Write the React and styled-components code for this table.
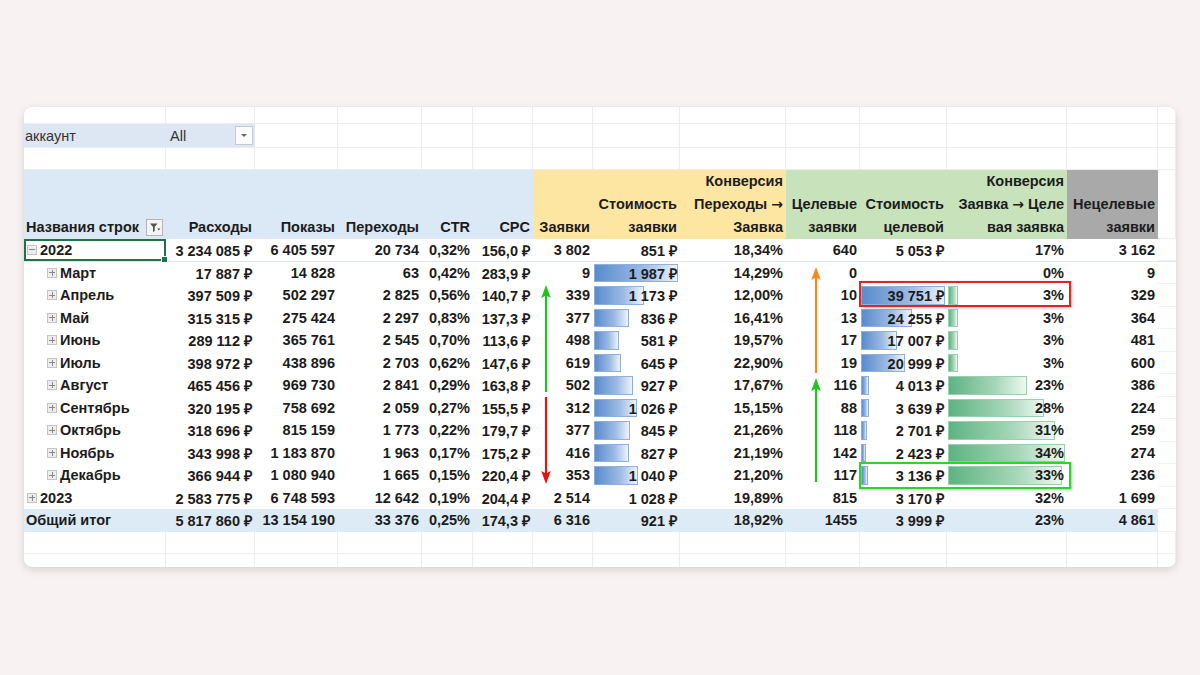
import React from "react"
import styled, { createGlobalStyle } from "styled-components"

const GlobalStyle = createGlobalStyle`
  body {
    margin: 0;
    background: #f8f3f2;
    font-family: "Liberation Sans", Arial, sans-serif;
  }
`

const COLS = "142px 89px 83px 84px 51px 60px 60px 87px 106px 74px 87px 120px 91px 1fr"

const rows = [
  { label: "2022", level: 0, open: true, selected: true, v: ["3 234 085 ₽", "6 405 597", "20 734", "0,32%", "156,0 ₽", "3 802", "851 ₽", "18,34%", "640", "5 053 ₽", "17%", "3 162"] },
  { label: "Март", level: 1, v: ["17 887 ₽", "14 828", "63", "0,42%", "283,9 ₽", "9", "1 987 ₽", "14,29%", "0", "", "0%", "9"], cost: 1987, tcost: 0, conv: 0 },
  { label: "Апрель", level: 1, v: ["397 509 ₽", "502 297", "2 825", "0,56%", "140,7 ₽", "339", "1 173 ₽", "12,00%", "10", "39 751 ₽", "3%", "329"], cost: 1173, tcost: 39751, conv: 3 },
  { label: "Май", level: 1, v: ["315 315 ₽", "275 424", "2 297", "0,83%", "137,3 ₽", "377", "836 ₽", "16,41%", "13", "24 255 ₽", "3%", "364"], cost: 836, tcost: 24255, conv: 3 },
  { label: "Июнь", level: 1, v: ["289 112 ₽", "365 761", "2 545", "0,70%", "113,6 ₽", "498", "581 ₽", "19,57%", "17", "17 007 ₽", "3%", "481"], cost: 581, tcost: 17007, conv: 3 },
  { label: "Июль", level: 1, v: ["398 972 ₽", "438 896", "2 703", "0,62%", "147,6 ₽", "619", "645 ₽", "22,90%", "19", "20 999 ₽", "3%", "600"], cost: 645, tcost: 20999, conv: 3 },
  { label: "Август", level: 1, v: ["465 456 ₽", "969 730", "2 841", "0,29%", "163,8 ₽", "502", "927 ₽", "17,67%", "116", "4 013 ₽", "23%", "386"], cost: 927, tcost: 4013, conv: 23 },
  { label: "Сентябрь", level: 1, v: ["320 195 ₽", "758 692", "2 059", "0,27%", "155,5 ₽", "312", "1 026 ₽", "15,15%", "88", "3 639 ₽", "28%", "224"], cost: 1026, tcost: 3639, conv: 28 },
  { label: "Октябрь", level: 1, v: ["318 696 ₽", "815 159", "1 773", "0,22%", "179,7 ₽", "377", "845 ₽", "21,26%", "118", "2 701 ₽", "31%", "259"], cost: 845, tcost: 2701, conv: 31 },
  { label: "Ноябрь", level: 1, v: ["343 998 ₽", "1 183 870", "1 963", "0,17%", "175,2 ₽", "416", "827 ₽", "21,19%", "142", "2 423 ₽", "34%", "274"], cost: 827, tcost: 2423, conv: 34 },
  { label: "Декабрь", level: 1, v: ["366 944 ₽", "1 080 940", "1 665", "0,15%", "220,4 ₽", "353", "1 040 ₽", "21,20%", "117", "3 136 ₽", "33%", "236"], cost: 1040, tcost: 3136, conv: 33 },
  { label: "2023", level: 0, open: false, v: ["2 583 775 ₽", "6 748 593", "12 642", "0,19%", "204,4 ₽", "2 514", "1 028 ₽", "19,89%", "815", "3 170 ₽", "32%", "1 699"] },
]

const total = ["5 817 860 ₽", "13 154 190", "33 376", "0,25%", "174,3 ₽", "6 316", "921 ₽", "18,92%", "1455", "3 999 ₽", "23%", "4 861"]

const BLUE = "#dbe8f5"
const YELLOW = "#fde6a2"
const GREEN = "#c8e2bb"
const GRAY = "#a9a9a9"

// "→" в заголовке рисуем отдельным шрифтом, чтобы стрелка была крупнее
const headers = [
  { bg: BLUE, lines: ["Расходы"] },
  { bg: BLUE, lines: ["Показы"] },
  { bg: BLUE, lines: ["Переходы"] },
  { bg: BLUE, lines: ["CTR"] },
  { bg: BLUE, lines: ["CPC"] },
  { bg: YELLOW, lines: ["Заявки"] },
  { bg: YELLOW, lines: ["Стоимость", "заявки"] },
  { bg: YELLOW, lines: ["Конверсия", ["Переходы ", ""], "Заявка"] },
  { bg: GREEN, lines: ["Целевые", "заявки"] },
  { bg: GREEN, lines: ["Стоимость", "целевой"] },
  { bg: GREEN, lines: ["Конверсия", ["Заявка ", " Целе"], "вая заявка"] },
  { bg: GRAY, lines: ["Нецелевые", "заявки"] },
]

export default function App() {
  return (
    <>
      <GlobalStyle />
      <Page>
        <Card>
          <Row $h={17}>
            {Array.from({ length: 14 }).map((_, i) => <GridCell key={i} />)}
          </Row>
          <Row $h={24}>
            <FilterCell>аккаунт</FilterCell>
            <FilterValue>
              <span>All</span>
              <DropButton><DropArrow /></DropButton>
            </FilterValue>
            {Array.from({ length: 12 }).map((_, i) => <GridCell key={i} />)}
          </Row>
          <Row $h={22}>
            {Array.from({ length: 14 }).map((_, i) => <GridCell key={i} />)}
          </Row>

          <Row $h={69}>
            <HeadCell $bg={BLUE} $left>
              <HeadLine>
                Названия строк
                <FilterBtn>
                  <svg width="12" height="11" viewBox="0 0 12 11">
                    <path d="M1 1.5h7.5L5.7 5v4L4 10V5z" fill="#555" />
                    <path d="M8.2 6.5h3.3L9.85 8.5z" fill="#555" />
                  </svg>
                </FilterBtn>
              </HeadLine>
            </HeadCell>
            {headers.map((h, i) => (
              <HeadCell key={i} $bg={h.bg}>
                {h.lines.map((l, j) => (
                  <HeadLine key={j}>
                    {Array.isArray(l) ? <span>{l[0]}<ArrowGlyph>→</ArrowGlyph>{l[1]}</span> : l}
                  </HeadLine>
                ))}
              </HeadCell>
            ))}
            <GridCell />
          </Row>

          {rows.map((r, idx) => (
            <Row key={idx} $h={22.5} $sep={idx === 0}>
              <LabelCell $level={r.level} $selected={r.selected}>
                <Toggle $open={r.open} $level={r.level} />
                {r.label}
                {r.selected && <Handle />}
              </LabelCell>
              {r.v.map((val, i) => (
                <NumCell key={i}>
                  {i === 6 && r.cost != null && (
                    <Bar $kind="blue" style={{ width: Math.round((r.cost / 1987) * 84) }} />
                  )}
                  {i === 9 && r.tcost > 0 && (
                    <Bar $kind="blue" style={{ width: Math.max(5, Math.round((r.tcost / 39751) * 84)) }} />
                  )}
                  {i === 10 && r.conv > 0 && (
                    <Bar $kind="green" style={{ width: Math.round((r.conv / 34) * 117) }} />
                  )}
                  <Val>{val}</Val>
                </NumCell>
              ))}
              <EdgeCell />
            </Row>
          ))}

          <TotalRow $h={22.5}>
            <LabelCell $level={0} $plain>Общий итог</LabelCell>
            {total.map((val, i) => <NumCell key={i}><Val>{val}</Val></NumCell>)}
            <EdgeCell />
          </TotalRow>

          <Row $h={22}>
            {Array.from({ length: 14 }).map((_, i) => <GridCell key={i} />)}
          </Row>
          <Row $h={22}>
            {Array.from({ length: 14 }).map((_, i) => <GridCell key={i} />)}
          </Row>

          <Arrow $x={516} $y={178} $h={107} $color="#1fc51f" $up />
          <Arrow $x={516} $y={290} $h={87} $color="#e01515" />
          <Arrow $x={786} $y={160} $h={106} $color="#f28a1d" $up />
          <Arrow $x={786} $y={271} $h={104} $color="#1fc51f" $up />

          <Mark $x={835} $y={174} $w={212} $h={26} $color="#e32222" />
          <Mark $x={835} $y={355} $w={212} $h={27} $color="#2bd62b" />
        </Card>
      </Page>
    </>
  )
}

function Arrow({ $x, $y, $h, $color, $up }) {
  return (
    <ArrowBox $x={$x} $y={$y}>
      <svg width="12" height={$h} viewBox={`0 0 12 ${$h}`}>
        {$up ? (
          <>
            <line x1="6" y1="10" x2="6" y2={$h} stroke={$color} strokeWidth="2.2" />
            <path d="M6 0 L10.8 13 L6 10.5 L1.2 13 Z" fill={$color} />
          </>
        ) : (
          <>
            <line x1="6" y1="0" x2="6" y2={$h - 10} stroke={$color} strokeWidth="2.2" />
            <path d={`M6 ${$h} L10.8 ${$h - 13} L6 ${$h - 10.5} L1.2 ${$h - 13} Z`} fill={$color} />
          </>
        )}
      </svg>
    </ArrowBox>
  )
}

const Page = styled.div`
  padding: 107px 24px 108px;
`

const Card = styled.div`
  position: relative;
  width: 1152px;
  height: 460px;
  background: #fff;
  border-radius: 8px;
  overflow: hidden;
  box-shadow: 0 3px 10px rgba(0, 0, 0, 0.13), 0 0 2px rgba(0, 0, 0, 0.06);
  color: #1c1c1c;
  font-size: 14.5px;
  font-weight: 700;
`

const Row = styled.div`
  display: grid;
  grid-template-columns: ${COLS};
  height: ${p => p.$h}px;
  box-sizing: border-box;
  ${p => p.$sep && "border-bottom: 1px solid #dde7f2;"}
`

const TotalRow = styled(Row)`
  background: linear-gradient(to right, #ddebf7 0, #ddebf7 1134px, #fff 1134px);
`

const GridCell = styled.div`
  border-right: 1px solid #ececec;
  border-bottom: 1px solid #ececec;
`

const EdgeCell = styled.div`
  border-bottom: 1px solid #f0f0f0;
`

const FilterCell = styled.div`
  background: #dce7f3;
  display: flex;
  align-items: center;
  padding-left: 1px;
  font-weight: 400;
  color: #333;
  font-size: 14.5px;
  border-bottom: 1px solid #ececec;
`

const FilterValue = styled.div`
  background: #dce7f3;
  display: flex;
  align-items: center;
  justify-content: space-between;
  padding: 0 2px 0 4px;
  font-weight: 400;
  color: #333;
  border-bottom: 1px solid #ececec;
`

const DropButton = styled.div`
  width: 16px;
  height: 17px;
  background: #fbfbfb;
  border: 1px solid #c9c9c9;
  display: flex;
  align-items: center;
  justify-content: center;
`

const DropArrow = styled.div`
  width: 0;
  height: 0;
  border-left: 3px solid transparent;
  border-right: 3px solid transparent;
  border-top: 3px solid #666;
`

const HeadCell = styled.div`
  background: ${p => p.$bg};
  display: flex;
  flex-direction: column;
  justify-content: flex-end;
  align-items: ${p => (p.$left ? "stretch" : "flex-end")};
  padding: 0 3px 0 2px;
  white-space: nowrap;
`

const HeadLine = styled.div`
  height: 23px;
  line-height: 23px;
  display: flex;
  align-items: center;
  justify-content: space-between;
`

const ArrowGlyph = styled.span`
  font-family: "DejaVu Sans", sans-serif;
  font-weight: 700;
  font-size: 14px;
`

const FilterBtn = styled.div`
  width: 15px;
  height: 15px;
  border: 1px solid #b5b5b5;
  background: #f4f4f4;
  display: flex;
  align-items: center;
  justify-content: center;
`

const LabelCell = styled.div`
  position: relative;
  display: flex;
  align-items: center;
  gap: 3px;
  padding-left: ${p => (p.$plain ? 2 : p.$level === 0 ? 3 : 23)}px;
  white-space: nowrap;
  box-sizing: border-box;
  ${p => p.$selected && "border: 2px solid #217346; padding-left: 1px;"}
`

const Handle = styled.div`
  position: absolute;
  right: -4px;
  bottom: -4px;
  width: 5px;
  height: 5px;
  background: #217346;
  border: 1px solid #fff;
`

const Toggle = styled.div`
  position: relative;
  width: 8px;
  height: 8px;
  border: 1px solid #c4c4c4;
  background: #ededed;
  flex: none;
  &::before {
    content: "";
    position: absolute;
    left: 1px;
    right: 1px;
    top: 3.5px;
    height: 1px;
    background: #888;
  }
  &::after {
    content: "";
    display: ${p => (p.$open ? "none" : "block")};
    position: absolute;
    top: 1px;
    bottom: 1px;
    left: 3.5px;
    width: 1px;
    background: #888;
  }
`

const NumCell = styled.div`
  position: relative;
  display: flex;
  align-items: center;
  justify-content: flex-end;
  padding-right: 3px;
  white-space: nowrap;
`

const Bar = styled.div`
  position: absolute;
  left: 1px;
  top: 2px;
  bottom: 2px;
  box-sizing: border-box;
  background: ${p =>
    p.$kind === "green"
      ? "linear-gradient(to right, #5db382, #a6d6b8 60%, #eef8f1)"
      : "linear-gradient(to right, #5a8bcd, #9dbbe4 60%, #eef3fb)"};
  border: 1px solid ${p => (p.$kind === "green" ? "#9ad0ae" : "#8eb0dd")};
`

const Val = styled.span`
  position: relative;
`

const ArrowBox = styled.div`
  position: absolute;
  left: ${p => p.$x}px;
  top: ${p => p.$y}px;
  line-height: 0;
`

const Mark = styled.div`
  position: absolute;
  left: ${p => p.$x}px;
  top: ${p => p.$y}px;
  width: ${p => p.$w}px;
  height: ${p => p.$h}px;
  box-sizing: border-box;
  border: 2px solid ${p => p.$color};
  box-shadow: 1px 1px 3px rgba(0, 0, 0, 0.25);
`
